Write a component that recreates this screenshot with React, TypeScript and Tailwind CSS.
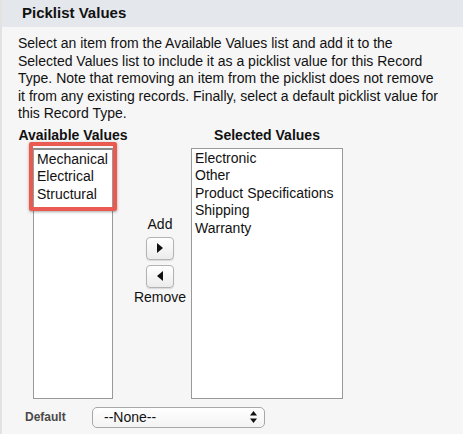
import React from 'react';

const available = ['Mechanical', 'Electrical', 'Structural'];
const selected = [
	'Electronic',
	'Other',
	'Product Specifications',
	'Shipping',
	'Warranty',
];

const ArrowButton = (props: { dir: 'right' | 'left' }) => {
	const { dir } = props;
	return (
		<button className="w-[28px] h-[23px] flex items-center justify-center rounded-[4px] border border-[#b3b3b3] bg-gradient-to-b from-white to-[#ececec] shadow-[0_1px_1px_rgba(0,0,0,0.12)]">
			<svg width="6" height="10" viewBox="0 0 6 10">
				{dir === 'right' ? (
					<path d="M0 0 L6 5 L0 10 Z" fill="#111" />
				) : (
					<path d="M6 0 L0 5 L6 10 Z" fill="#111" />
				)}
			</svg>
		</button>
	);
};

export default function App() {
	return (
		<div className="w-[463px] h-[434px] overflow-hidden bg-[#f6f6f6] border-l-2 border-[#e2e2e2] font-['Liberation_Sans',Arial,sans-serif] text-[#111]">
			<div className="h-[27px] bg-[#e4e7ec] flex items-center pl-[20px]">
				<span className="text-[15px] font-bold text-[#111]">
					Picklist Values
				</span>
			</div>

			<p className="mt-[8px] px-[16px] text-[14px] leading-[17.5px] w-[458px]">
				Select an item from the Available Values list and add it to the
				Selected Values list to include it as a picklist value for this
				Record Type. Note that removing an item from the picklist does
				not remove it from any existing records. Finally, select a
				default picklist value for this Record Type.
			</p>

			<div className="flex mt-[4px] pl-[18px]">
				<div className="w-[106px] flex flex-col items-center relative">
					<span className="text-[14px] font-bold leading-[17px] whitespace-nowrap">
						Available Values
					</span>
					<div className="mt-[4px] w-[80px] h-[251px] bg-white border border-[#999] border-t-2 border-t-[#8a8a8a] pt-[1px] pl-[3px] text-[14px] leading-[17.5px]">
						{available.map((v) => (
							<div key={v}>{v}</div>
						))}
					</div>
					<div className="absolute left-[9px] top-[15px] w-[88px] h-[69px] border-[4px] border-[#ea5a50] rounded-[2px] shadow-[0_1px_3px_rgba(0,0,0,0.35)]" />
				</div>

				<div className="w-[65px] flex flex-col items-center pl-[3px] pt-[89px] text-[14px] leading-[17px]">
					<span>Add</span>
					<div className="mt-[4px]">
						<ArrowButton dir="right" />
					</div>
					<div className="mt-[5px]">
						<ArrowButton dir="left" />
					</div>
					<span className="mt-[1px]">Remove</span>
				</div>

				<div className="w-[152px] flex flex-col items-center">
					<span className="text-[14px] font-bold leading-[17px]">
						Selected Values
					</span>
					<div className="mt-[4px] w-[152px] h-[251px] bg-white border border-[#999] pt-[1px] pl-[3px] text-[14px] leading-[17.5px]">
						{selected.map((v) => (
							<div key={v}>{v}</div>
						))}
					</div>
				</div>
			</div>

			<div className="flex items-center mt-[8px] pl-[23px]">
				<span className="w-[67px] text-[12px] font-bold text-[#4a4a4a]">
					Default
				</span>
				<div className="w-[173px] h-[21px] rounded-[5px] border border-[#a8a8a8] bg-gradient-to-b from-white to-[#f3f3f3] flex items-center justify-between pl-[11px] pr-[7px] text-[14px]">
					<span>--None--</span>
					<svg width="7" height="12" viewBox="0 0 7 12">
						<path d="M3.5 0 L7 4.5 L0 4.5 Z" fill="#111" />
						<path d="M0 7.5 L7 7.5 L3.5 12 Z" fill="#111" />
					</svg>
				</div>
			</div>
		</div>
	);
}
